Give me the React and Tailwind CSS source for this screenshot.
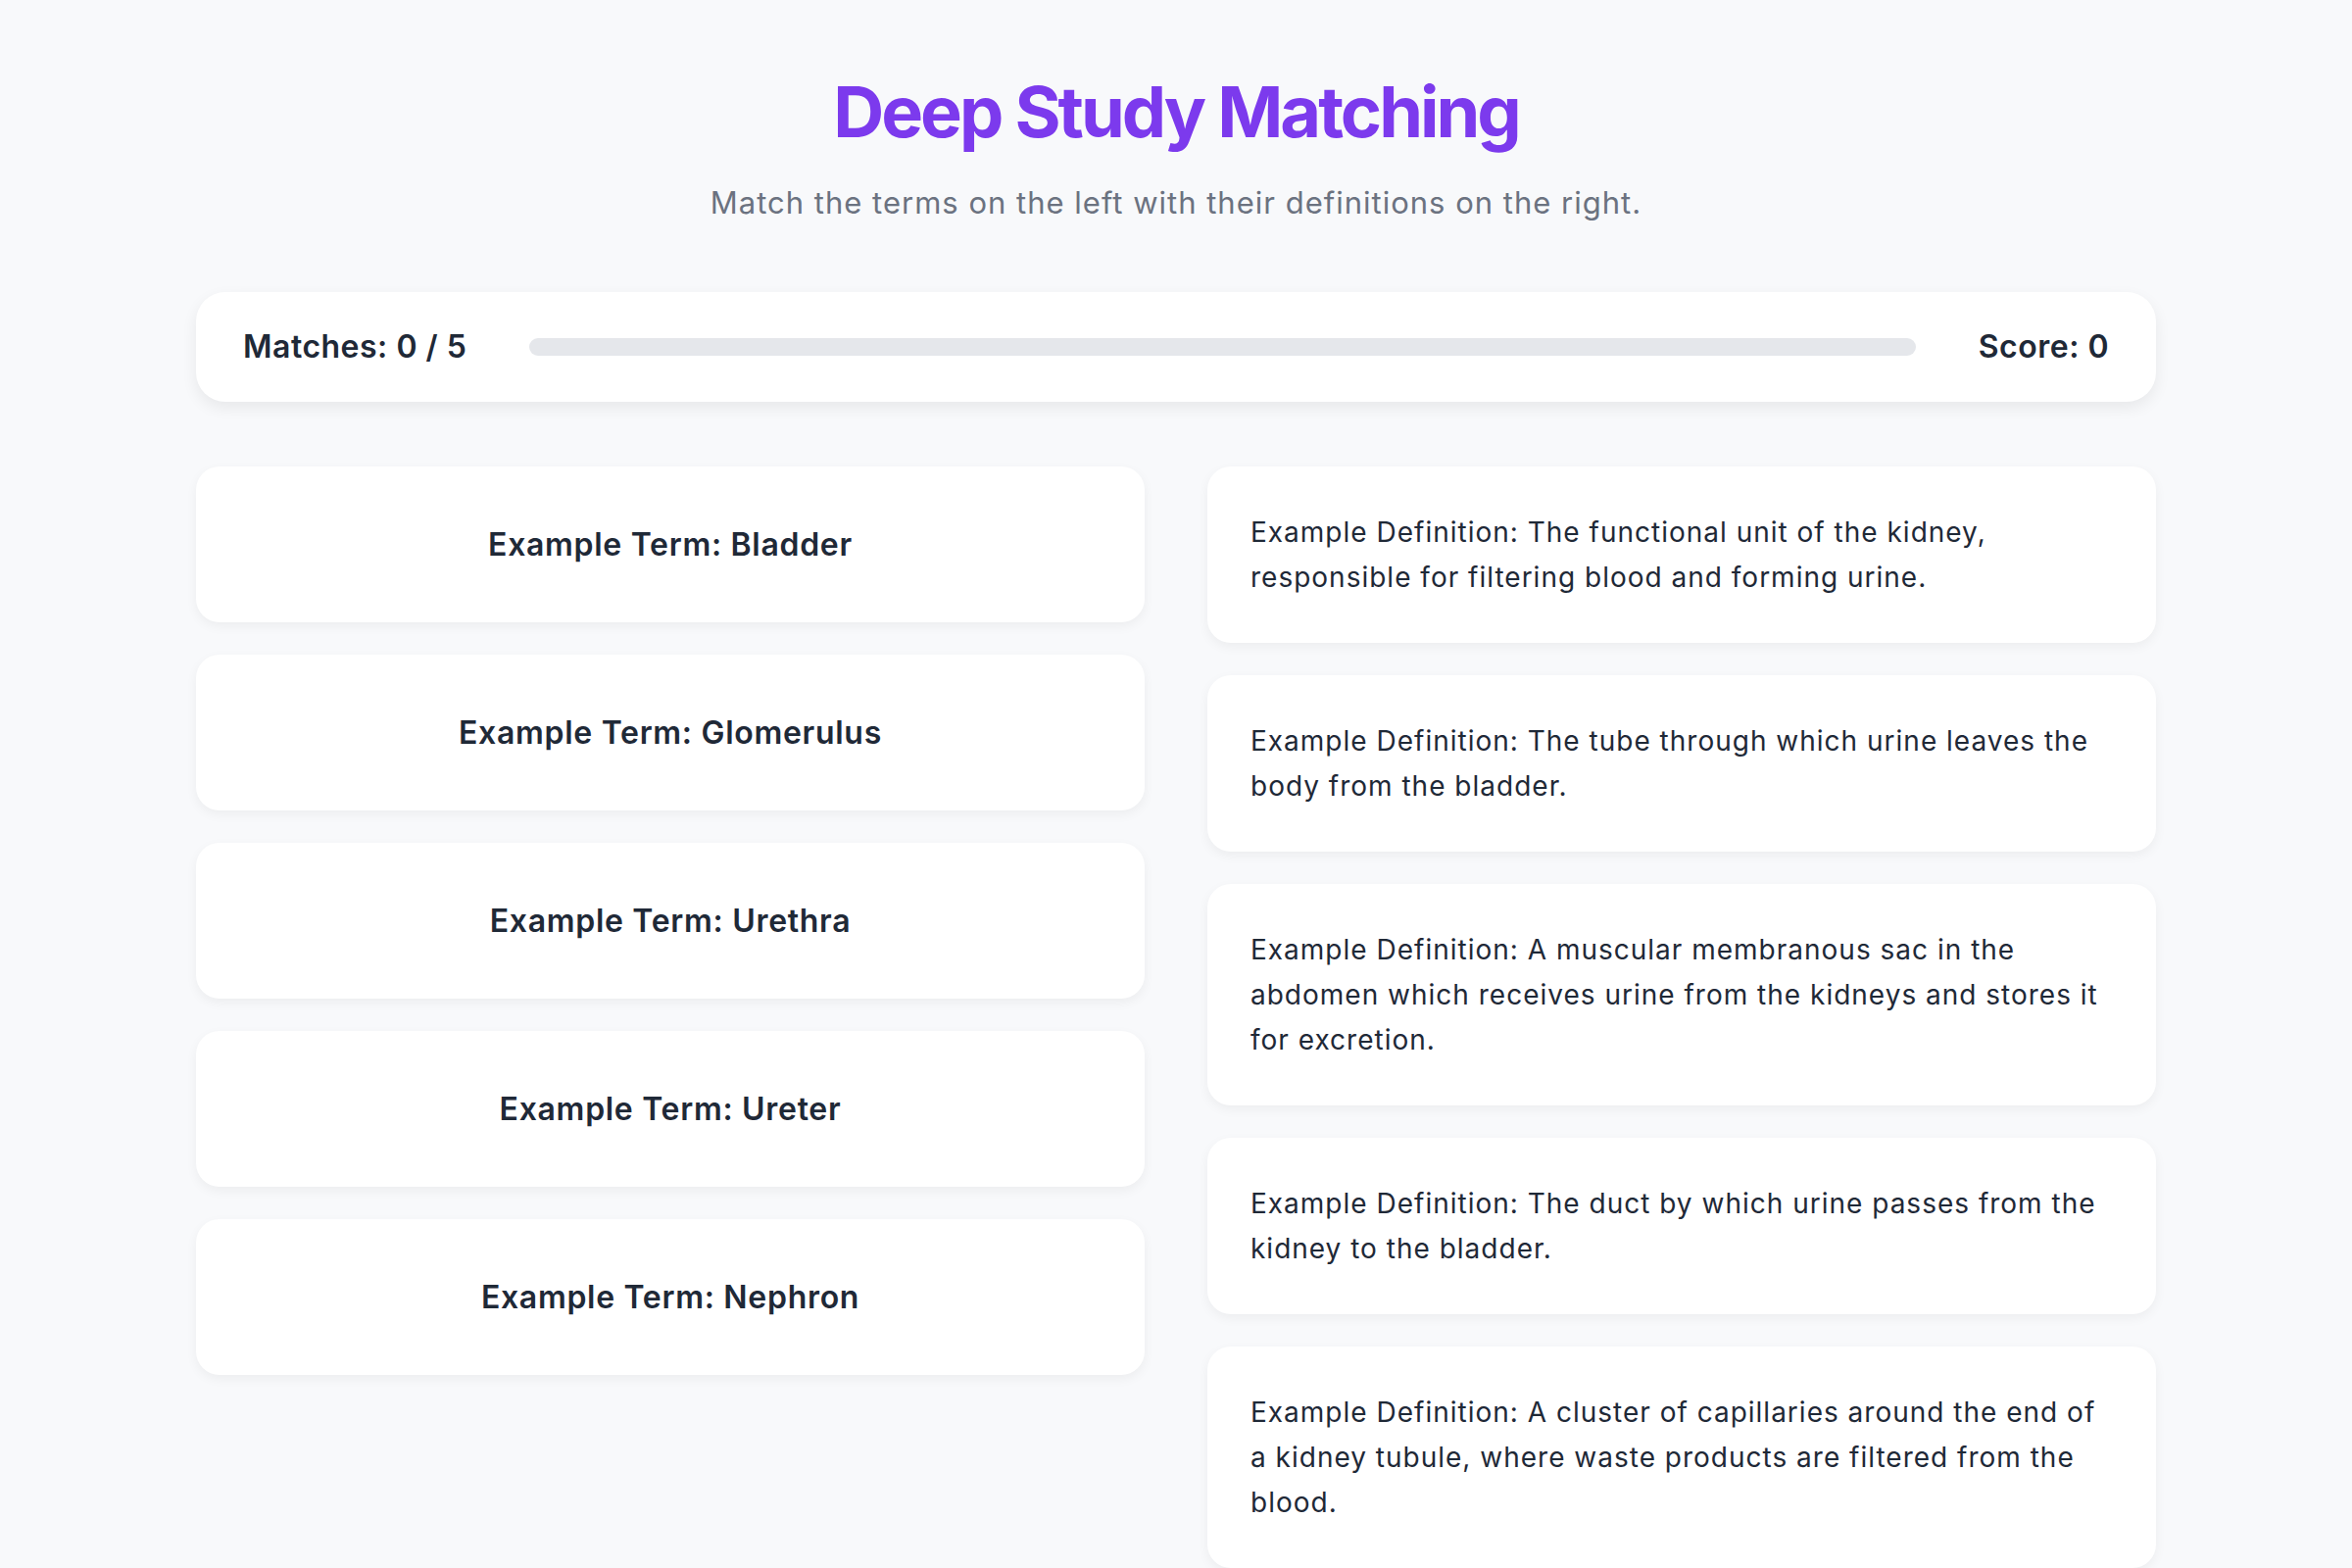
const terms = [
  "Example Term: Bladder",
  "Example Term: Glomerulus",
  "Example Term: Urethra",
  "Example Term: Ureter",
  "Example Term: Nephron",
];

const definitions = [
  "Example Definition: The functional unit of the kidney, responsible for filtering blood and forming urine.",
  "Example Definition: The tube through which urine leaves the body from the bladder.",
  "Example Definition: A muscular membranous sac in the abdomen which receives urine from the kidneys and stores it for excretion.",
  "Example Definition: The duct by which urine passes from the kidney to the bladder.",
  "Example Definition: A cluster of capillaries around the end of a kidney tubule, where waste products are filtered from the blood.",
];

export default function App() {
  return (
    <div className="min-h-screen w-full bg-[#f8f9fb] font-['Inter',sans-serif] text-[#1f2937]">
      <div className="mx-auto w-[2000px] pt-[64px] pb-[40px]">
        <header className="text-center">
          <h1 className="text-[72px] leading-[100px] font-bold tracking-[-3px] text-[#7c3aed]">
            Deep Study Matching
          </h1>
          <p className="mt-[23px] text-[31px] leading-[40px] tracking-[1px] text-[#6b7280]">
            Match the terms on the left with their definitions on the right.
          </p>
        </header>

        <div className="mt-[71px] flex h-[112px] items-center gap-[64px] rounded-[30px] bg-white px-[48px] shadow-[0_6px_16px_rgba(0,0,0,0.07)]">
          <span className="text-[32px] font-semibold tracking-[0.5px]">Matches: 0 / 5</span>
          <div className="h-[18px] flex-1 rounded-full bg-[#e5e7eb]" />
          <span className="text-[32px] font-semibold tracking-[0.5px]">Score: 0</span>
        </div>

        <div className="mt-[66px] grid grid-cols-2 gap-[64px]">
          <div className="flex flex-col gap-[33px]">
            {terms.map((t) => (
              <div
                key={t}
                className="flex h-[159px] items-center justify-center rounded-[24px] bg-white px-[44px] shadow-[0_4px_12px_rgba(0,0,0,0.05)]"
              >
                <span className="text-[32px] font-semibold tracking-[0.7px]">{t}</span>
              </div>
            ))}
          </div>
          <div className="flex flex-col gap-[33px]">
            {definitions.map((d) => (
              <div
                key={d}
                className="rounded-[24px] bg-white p-[44px] shadow-[0_4px_12px_rgba(0,0,0,0.05)]"
              >
                <p className="text-[28px] leading-[46px] tracking-[1px]">{d}</p>
              </div>
            ))}
          </div>
        </div>
      </div>
    </div>
  );
}
